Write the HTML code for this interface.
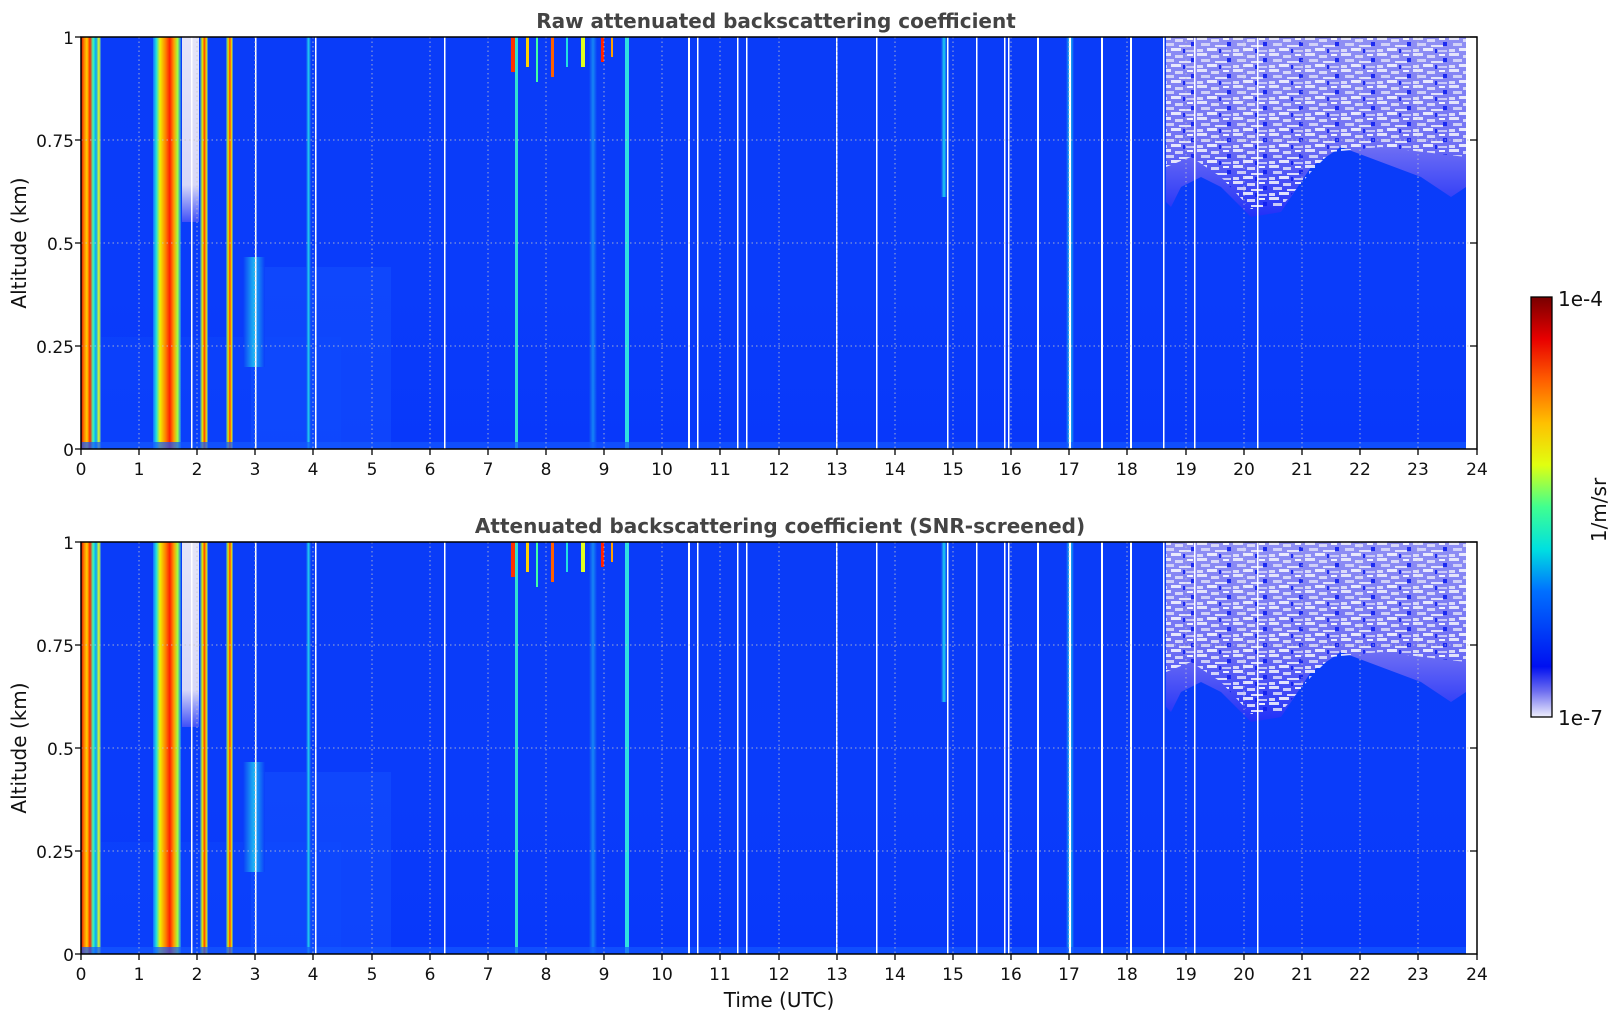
<!DOCTYPE html>
<html><head><meta charset="utf-8"><style>
html,body{margin:0;padding:0;background:#fff;}
svg{display:block;font-family:"DejaVu Sans","Liberation Sans",sans-serif;}
</style></head><body>
<svg width="1621" height="1020" viewBox="0 0 1621 1020" xmlns="http://www.w3.org/2000/svg">
<defs>
<linearGradient id="bgv" x1="0" y1="0" x2="0" y2="1">
<stop offset="0" stop-color="#0a3cf8"/><stop offset="0.6" stop-color="#0a3cfa"/><stop offset="1" stop-color="#0838fa"/>
</linearGradient>
<linearGradient id="c0" x1="0" y1="0" x2="1" y2="0">
<stop offset="0" stop-color="#e00000"/><stop offset="0.15" stop-color="#ff8000"/><stop offset="0.3" stop-color="#ffd000"/><stop offset="0.45" stop-color="#ff2000"/><stop offset="0.6" stop-color="#40ffb0"/><stop offset="0.75" stop-color="#00a0ff"/><stop offset="0.9" stop-color="#e0ff20"/><stop offset="1" stop-color="#1060ff"/>
</linearGradient>
<linearGradient id="c1" x1="0" y1="0" x2="1" y2="0">
<stop offset="0" stop-color="#1070ff"/><stop offset="0.12" stop-color="#20e0e0"/><stop offset="0.25" stop-color="#f0f000"/><stop offset="0.45" stop-color="#ff8000"/><stop offset="0.6" stop-color="#ff2000"/><stop offset="0.75" stop-color="#ffa000"/><stop offset="0.88" stop-color="#a0ff40"/><stop offset="1" stop-color="#1070ff"/>
</linearGradient>
<linearGradient id="c2" x1="0" y1="0" x2="1" y2="0">
<stop offset="0" stop-color="#1070ff"/><stop offset="0.3" stop-color="#e0f000"/><stop offset="0.55" stop-color="#ff4000"/><stop offset="0.8" stop-color="#f0e000"/><stop offset="1" stop-color="#1070ff"/>
</linearGradient>
<linearGradient id="c3" x1="0" y1="0" x2="1" y2="0">
<stop offset="0" stop-color="#0a3cf8"/><stop offset="0.5" stop-color="#20d0f0"/><stop offset="1" stop-color="#0a3cf8"/>
</linearGradient>
<linearGradient id="lav" x1="0" y1="0" x2="0" y2="1">
<stop offset="0" stop-color="#e4e4f8"/><stop offset="0.8" stop-color="#d8d8f8"/><stop offset="1" stop-color="#4050f8"/>
</linearGradient>
<linearGradient id="lav2" x1="0" y1="0" x2="0" y2="1">
<stop offset="0" stop-color="#9090f4"/><stop offset="0.6" stop-color="#7070f4"/><stop offset="1" stop-color="#2030f8"/>
</linearGradient>
<pattern id="spk" width="36" height="16" patternUnits="userSpaceOnUse">
<rect x="0" y="0" width="10" height="3" fill="#eeeefc"/><rect x="14" y="2" width="8" height="3" fill="#e0e0fa"/><rect x="26" y="1" width="6" height="2" fill="#ffffff"/>
<rect x="4" y="6" width="9" height="3" fill="#d8d8f8"/><rect x="18" y="8" width="12" height="2" fill="#ececfc"/>
<rect x="0" y="12" width="6" height="3" fill="#e4e4fa"/><rect x="10" y="11" width="10" height="3" fill="#f4f4fe"/><rect x="25" y="13" width="9" height="2" fill="#d0d0f8"/>
<rect x="30" y="5" width="4" height="4" fill="#1020f0"/><rect x="22" y="12" width="2" height="4" fill="#1020f0"/>
</pattern>
<linearGradient id="cb" x1="0" y1="1" x2="0" y2="0">
<stop offset="0" stop-color="#eeeefc"/><stop offset="0.06" stop-color="#7070f0"/><stop offset="0.12" stop-color="#0010f0"/><stop offset="0.3" stop-color="#0070ff"/><stop offset="0.4" stop-color="#00e0e0"/><stop offset="0.5" stop-color="#40ff90"/><stop offset="0.6" stop-color="#e0ff10"/><stop offset="0.7" stop-color="#ffc000"/><stop offset="0.8" stop-color="#ff6000"/><stop offset="0.9" stop-color="#e80000"/><stop offset="1" stop-color="#780000"/>
</linearGradient>
<symbol id="data" viewBox="0 0 1396 412" width="1396" height="412">
<rect x="0" y="0" width="1385" height="412" fill="url(#bgv)"/>
<rect x="170" y="230" width="140" height="182" fill="#1a5cff" opacity="0.35"/>
<rect x="0" y="300" width="260" height="112" fill="#1050ff" opacity="0.3"/>
<rect x="0" y="0" width="20" height="412" fill="url(#c0)"/>
<rect x="72" y="0" width="28" height="412" fill="url(#c1)"/>
<rect x="101" y="0" width="17" height="185" fill="url(#lav)"/>
<rect x="119" y="0" width="8" height="412" fill="url(#c2)"/>
<rect x="145" y="0" width="7" height="412" fill="url(#c2)"/>
<rect x="162" y="220" width="22" height="110" fill="url(#c3)" opacity="0.8"/>
<rect x="225" y="0" width="5" height="412" fill="url(#c3)"/>
<rect x="434" y="0" width="3" height="412" fill="#30e0d0"/>
<rect x="544" y="0" width="4" height="412" fill="#30e0e0"/>
<rect x="508" y="0" width="8" height="412" fill="url(#c3)" opacity="0.5"/>
<rect x="985" y="0" width="8" height="412" fill="url(#c3)"/>
<rect x="860" y="0" width="6" height="160" fill="url(#c3)"/>
<rect x="430" y="0" width="4" height="35" fill="#ff3000"/><rect x="445" y="0" width="3" height="30" fill="#ffd000"/><rect x="455" y="0" width="2" height="45" fill="#40ffa0"/><rect x="470" y="0" width="3" height="40" fill="#ff6000"/><rect x="485" y="0" width="2" height="30" fill="#20e0e0"/><rect x="500" y="0" width="4" height="30" fill="#e0ff20"/><rect x="520" y="0" width="3" height="25" fill="#ff2000"/><rect x="530" y="0" width="2" height="20" fill="#ffa000"/>
<path d="M1085 0 H1385 V150 L1370 160 L1340 140 L1260 110 L1230 130 L1200 175 L1170 180 L1140 150 L1120 140 L1100 150 L1090 170 L1085 165 Z" fill="url(#lav2)"/>
<path d="M1085 0 H1385 V120 L1300 110 L1250 115 L1230 135 L1200 170 L1170 172 L1140 140 L1110 120 L1085 130 Z" fill="url(#spk)" opacity="0.9"/>
<rect x="0" y="405" width="1385" height="7" fill="#1458ff" opacity="0.7"/>
<g fill="#fff">
<rect x="110" width="1.5" height="412"/><rect x="174" width="1.5" height="412"/><rect x="234" width="1.5" height="412"/>
<rect x="363" width="1.5" height="412"/><rect x="607" width="2" height="412"/><rect x="616" width="1.5" height="412"/>
<rect x="656" width="1.5" height="412"/><rect x="665" width="1.5" height="412"/><rect x="755" width="1.5" height="412"/>
<rect x="795" width="1.5" height="412"/><rect x="866" width="1.5" height="412"/><rect x="895" width="1.5" height="412"/>
<rect x="923" width="1.5" height="412"/><rect x="927" width="1.5" height="412"/><rect x="956" width="2" height="412"/>
<rect x="988" width="2" height="412"/><rect x="1020" width="2" height="412"/><rect x="1049" width="2" height="412"/>
<rect x="1082" width="1.5" height="412"/><rect x="1113" width="1.5" height="412"/><rect x="1176" width="1.5" height="412"/>
<rect x="1385" width="11" height="412"/>
</g>
</symbol>
</defs>

<text x="776" y="28" text-anchor="middle" font-size="20" font-weight="bold" fill="#444">Raw attenuated backscattering coefficient</text>
<text x="780" y="533" text-anchor="middle" font-size="20" font-weight="bold" fill="#444">Attenuated backscattering coefficient (SNR-screened)</text>

<use href="#data" x="81" y="37"/>
<use href="#data" x="81" y="542"/>

<g stroke="#c8c8c8" stroke-width="1" stroke-dasharray="1.5,3" opacity="0.8">
<path d="M81 140H1477M81 243H1477M81 346H1477M81 645H1477M81 748H1477M81 851H1477"/>
<path d="M139 37V449M197 37V449M255 37V449M313 37V449M372 37V449M430 37V449M488 37V449M546 37V449M604 37V449M662 37V449M720 37V449M779 37V449M837 37V449M895 37V449M953 37V449M1011 37V449M1069 37V449M1127 37V449M1186 37V449M1244 37V449M1302 37V449M1360 37V449M1418 37V449"/>
<path d="M139 542V954M197 542V954M255 542V954M313 542V954M372 542V954M430 542V954M488 542V954M546 542V954M604 542V954M662 542V954M720 542V954M779 542V954M837 542V954M895 542V954M953 542V954M1011 542V954M1069 542V954M1127 542V954M1186 542V954M1244 542V954M1302 542V954M1360 542V954M1418 542V954"/>
</g>

<g fill="none" stroke="#000" stroke-width="1.5">
<rect x="81" y="37" width="1396" height="412"/>
<rect x="81" y="542" width="1396" height="412"/>
</g>
<g stroke="#000" stroke-width="1.3">
<path d="M81 37h-6M81 140h-6M81 243h-6M81 346h-6M81 449h-6M1477 140h-7M1477 243h-7M1477 346h-7M1477 37h-7"/>
<path d="M81 542h-6M81 645h-6M81 748h-6M81 851h-6M81 954h-6M1477 645h-7M1477 748h-7M1477 851h-7M1477 542h-7"/>
<path d="M81 449v6M139 449v6M197 449v6M255 449v6M313 449v6M372 449v6M430 449v6M488 449v6M546 449v6M604 449v6M662 449v6M720 449v6M779 449v6M837 449v6M895 449v6M953 449v6M1011 449v6M1069 449v6M1127 449v6M1186 449v6M1244 449v6M1302 449v6M1360 449v6M1418 449v6M1477 449v6"/>
<path d="M81 954v6M139 954v6M197 954v6M255 954v6M313 954v6M372 954v6M430 954v6M488 954v6M546 954v6M604 954v6M662 954v6M720 954v6M779 954v6M837 954v6M895 954v6M953 954v6M1011 954v6M1069 954v6M1127 954v6M1186 954v6M1244 954v6M1302 954v6M1360 954v6M1418 954v6M1477 954v6"/>
</g>

<g font-size="17" fill="#111" text-anchor="end">
<text x="74" y="44">1</text><text x="74" y="147">0.75</text><text x="74" y="250">0.5</text><text x="74" y="353">0.25</text><text x="74" y="456">0</text>
<text x="74" y="549">1</text><text x="74" y="652">0.75</text><text x="74" y="755">0.5</text><text x="74" y="858">0.25</text><text x="74" y="961">0</text>
</g>
<g font-size="17" fill="#111" text-anchor="middle">
<text x="81" y="475">0</text><text x="139" y="475">1</text><text x="197" y="475">2</text><text x="255" y="475">3</text><text x="313" y="475">4</text><text x="372" y="475">5</text><text x="430" y="475">6</text><text x="488" y="475">7</text><text x="546" y="475">8</text><text x="604" y="475">9</text><text x="662" y="475">10</text><text x="720" y="475">11</text><text x="779" y="475">12</text><text x="837" y="475">13</text><text x="895" y="475">14</text><text x="953" y="475">15</text><text x="1011" y="475">16</text><text x="1069" y="475">17</text><text x="1127" y="475">18</text><text x="1186" y="475">19</text><text x="1244" y="475">20</text><text x="1302" y="475">21</text><text x="1360" y="475">22</text><text x="1418" y="475">23</text><text x="1477" y="475">24</text>
<text x="81" y="980">0</text><text x="139" y="980">1</text><text x="197" y="980">2</text><text x="255" y="980">3</text><text x="313" y="980">4</text><text x="372" y="980">5</text><text x="430" y="980">6</text><text x="488" y="980">7</text><text x="546" y="980">8</text><text x="604" y="980">9</text><text x="662" y="980">10</text><text x="720" y="980">11</text><text x="779" y="980">12</text><text x="837" y="980">13</text><text x="895" y="980">14</text><text x="953" y="980">15</text><text x="1011" y="980">16</text><text x="1069" y="980">17</text><text x="1127" y="980">18</text><text x="1186" y="980">19</text><text x="1244" y="980">20</text><text x="1302" y="980">21</text><text x="1360" y="980">22</text><text x="1418" y="980">23</text><text x="1477" y="980">24</text>
</g>
<text x="779" y="1007" text-anchor="middle" font-size="20" fill="#111">Time (UTC)</text>
<text transform="translate(26,243) rotate(-90)" text-anchor="middle" font-size="20" fill="#111">Altitude (km)</text>
<text transform="translate(26,748) rotate(-90)" text-anchor="middle" font-size="20" fill="#111">Altitude (km)</text>

<rect x="1531" y="297" width="21" height="420" fill="url(#cb)" stroke="#000" stroke-width="1.3"/>
<text x="1558" y="306" font-size="20" fill="#111">1e-4</text>
<text x="1558" y="725" font-size="20" fill="#111">1e-7</text>
<text transform="translate(1606,510) rotate(-90)" text-anchor="middle" font-size="20" fill="#111">1/m/sr</text>
</svg>
</body></html>
